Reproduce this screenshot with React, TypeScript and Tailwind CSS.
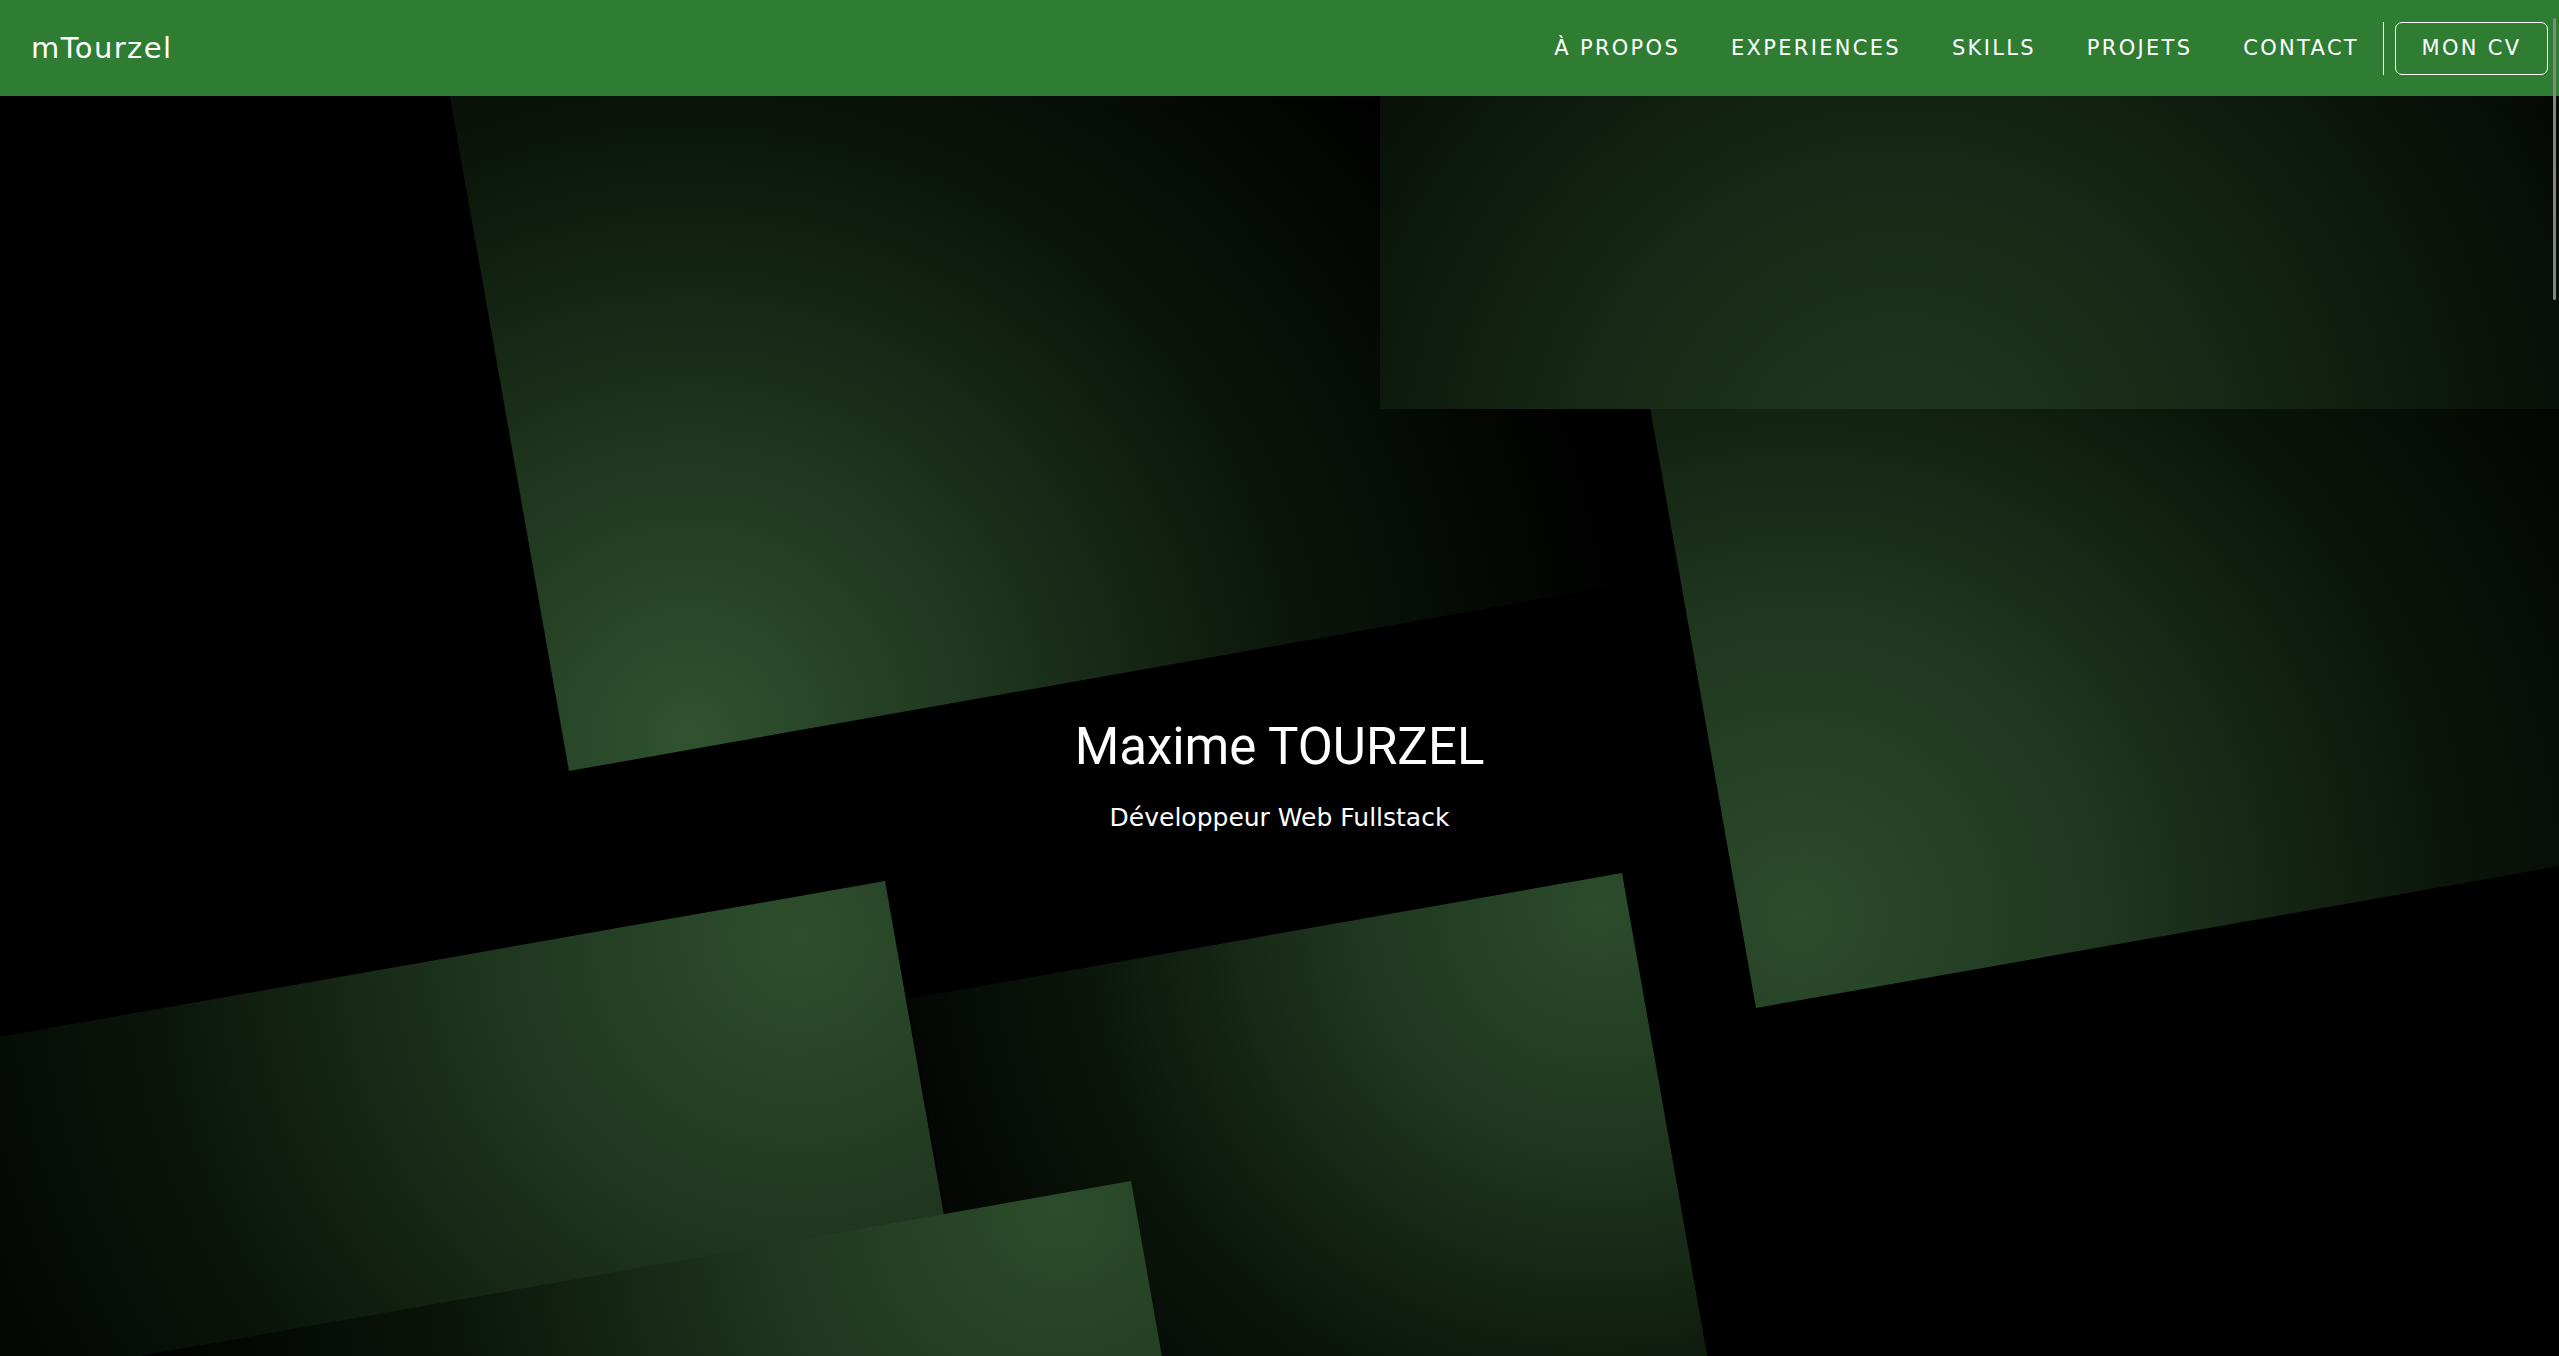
const links = ['À PROPOS', 'EXPERIENCES', 'SKILLS', 'PROJETS', 'CONTACT']

// tilted panels of the hero background, coordinates in hero space (2559 x 1260)
const panels = [
  { id: 'p1', pts: '395,-310 1491,-504 1665,481 569,675', cx: 690, cy: 640, r: 950, peak: '#305330' },
  { id: 'p2', pts: '1565,-171 2550,-345 2741,738 1756,912', cx: 1800, cy: 820, r: 1000, peak: '#2c4c2b' },
  { id: 'p4', pts: '908,903 1622,777 1761,1565 1047,1691', cx: 1600, cy: 810, r: 800, peak: '#2c4c2b' },
  { id: 'p3', pts: '-297,993 885,785 1024,1573 -158,1781', cx: 800, cy: 840, r: 1000, peak: '#2e4f2d' },
  { id: 'p5', pts: '-149,1311 1131,1085 1235,1676 -45,1902', cx: 1060, cy: 1110, r: 950, peak: '#2c4d2b' },
]

function Background() {
  return (
    <svg className="absolute inset-0 h-full w-full" viewBox="0 0 2559 1260" preserveAspectRatio="none">
      <defs>
        {panels.map((p) => (
          <radialGradient key={p.id} id={`g-${p.id}`} gradientUnits="userSpaceOnUse" cx={p.cx} cy={p.cy} r={p.r}>
            <stop offset="0" stopColor={p.peak} />
            <stop offset="0.3" stopColor="#1f371f" />
            <stop offset="0.65" stopColor="#0b150b" />
            <stop offset="1" stopColor="#000000" />
          </radialGradient>
        ))}
        <radialGradient id="g-top" gradientUnits="userSpaceOnUse" cx="1900" cy="390" r="760">
          <stop offset="0" stopColor="#21391f" />
          <stop offset="0.4" stopColor="#172a17" />
          <stop offset="0.75" stopColor="#0c160c" />
          <stop offset="1" stopColor="#050905" />
        </radialGradient>
      </defs>
      <rect width="2559" height="1260" fill="#000" />
      {panels.map((p) => (
        <polygon key={p.id} points={p.pts} fill={`url(#g-${p.id})`} />
      ))}
      <rect x="1380" y="0" width="1179" height="313" fill="url(#g-top)" />
    </svg>
  )
}

function Navbar() {
  return (
    <header className="flex h-[96px] items-center justify-between bg-[#2e7d32] pl-[31px] pr-[11px] text-white font-['DejaVu_Sans',sans-serif]">
      <a className="text-[29px] leading-none tracking-[1.4px]">mTourzel</a>
      <nav className="flex items-center">
        <ul className="flex items-center gap-[51px]">
          {links.map((l) => (
            <li key={l} className="text-[21px] leading-none tracking-[2.3px]">
              {l}
            </li>
          ))}
        </ul>
        <div className="ml-[24px] h-[53px] w-px bg-white" />
        <button className="ml-[11px] flex h-[53px] w-[153px] items-center justify-center rounded-[7px] border border-white text-[21px] leading-none tracking-[2.3px]">
          MON CV
        </button>
      </nav>
    </header>
  )
}

export default function App() {
  return (
    <div className="relative h-screen w-full overflow-hidden bg-black">
      <Navbar />
      <section className="relative h-[1260px] overflow-hidden">
        <Background />
        <div className="relative flex flex-col items-center pt-[625px] text-white">
          <h1 className="text-[51px] font-normal leading-none font-['Roboto',sans-serif]">Maxime TOURZEL</h1>
          <p className="mt-[33px] text-[25px] leading-none font-['DejaVu_Sans',sans-serif]">Développeur Web Fullstack</p>
        </div>
      </section>
      <div className="absolute right-[3px] top-[18px] h-[282px] w-[3px] rounded-full bg-[#858585]" />
    </div>
  )
}
